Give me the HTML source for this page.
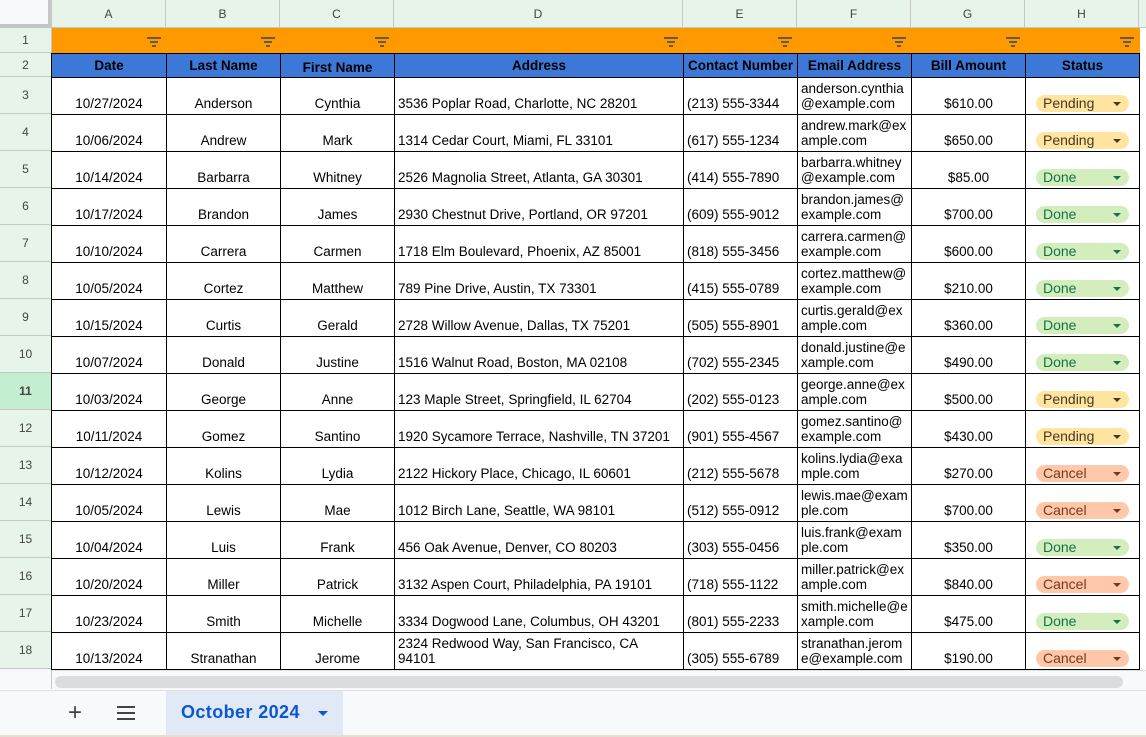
<!DOCTYPE html>
<html><head><meta charset="utf-8"><style>
*{margin:0;padding:0;box-sizing:border-box}
body{width:1146px;height:737px;overflow:hidden;background:#fff;font-family:"Liberation Sans",Arial,sans-serif;position:relative}
.ch{position:absolute;top:0;height:28px;background:#e6f4ea;border-right:1px solid #c4c7c5;border-bottom:1px solid #c4c7c5;font-size:12px;color:#444;text-align:center;line-height:28px}
.rh{position:absolute;left:0;width:52px;background:#e6f4ea;border-right:1px solid #c4c7c5;border-bottom:1px solid #c4c7c5;font-size:12px;color:#444;text-align:center}
table{position:absolute;left:51px;top:28px;border-collapse:collapse;table-layout:fixed}
td{border:1px solid #000;font-size:13.5px;color:#000;vertical-align:bottom;line-height:15px;padding:0 3px 3px;overflow:hidden;white-space:nowrap}
tr.o td{background:#ff9900;border:none;height:25px;text-align:right;vertical-align:middle;padding:2px 6px 0 0}
tr.b td{background:#3c78d8;height:24px;font-weight:bold;text-align:center;vertical-align:middle;padding:0 2px}
tr.d td{height:37px}
.c{text-align:center}.l{text-align:left}
.p{display:block;height:17px;border-radius:9px;font-size:14px;line-height:17px;padding-left:7px;position:relative;margin:0 7px -1px 7px}
.p:after{content:"";position:absolute;right:8px;top:7px;border-left:4px solid transparent;border-right:4px solid transparent;border-top:4px solid currentColor}
.pe{background:#ffe5a0;color:#473821}.do{background:#d4edbc;color:#11734b}.ca{background:#ffc8aa;color:#753918}
.f{display:inline-block;width:14px;height:9px;position:relative}
.f i{position:absolute;left:0;right:0;height:2px;background:#6b5a3a}
</style></head><body>
<div class="ch" style="left:0;width:52px;background:#f8f9fa;border-right:4px solid #c4c7c5;border-bottom:4px solid #c4c7c5"></div>
<div class="ch" style="left:52px;width:114px">A</div>
<div class="ch" style="left:166px;width:114px">B</div>
<div class="ch" style="left:280px;width:114px">C</div>
<div class="ch" style="left:394px;width:289px">D</div>
<div class="ch" style="left:683px;width:114px">E</div>
<div class="ch" style="left:797px;width:114px">F</div>
<div class="ch" style="left:911px;width:114px">G</div>
<div class="ch" style="left:1025px;width:114px">H</div>
<div class="ch" style="left:1139px;width:7px;border-right:none"></div>
<div class="rh" style="top:28px;height:25px;line-height:25px">1</div>
<div class="rh" style="top:53px;height:24px;line-height:24px">2</div>
<div class="rh" style="top:77px;height:37px;line-height:37px">3</div>
<div class="rh" style="top:114px;height:37px;line-height:37px">4</div>
<div class="rh" style="top:151px;height:37px;line-height:37px">5</div>
<div class="rh" style="top:188px;height:37px;line-height:37px">6</div>
<div class="rh" style="top:225px;height:37px;line-height:37px">7</div>
<div class="rh" style="top:262px;height:37px;line-height:37px">8</div>
<div class="rh" style="top:299px;height:37px;line-height:37px">9</div>
<div class="rh" style="top:336px;height:37px;line-height:37px">10</div>
<div class="rh" style="top:373px;height:37px;line-height:37px;background:#c4eed0;font-weight:bold">11</div>
<div class="rh" style="top:410px;height:37px;line-height:37px">12</div>
<div class="rh" style="top:447px;height:37px;line-height:37px">13</div>
<div class="rh" style="top:484px;height:37px;line-height:37px">14</div>
<div class="rh" style="top:521px;height:37px;line-height:37px">15</div>
<div class="rh" style="top:558px;height:37px;line-height:37px">16</div>
<div class="rh" style="top:595px;height:37px;line-height:37px">17</div>
<div class="rh" style="top:632px;height:37px;line-height:37px">18</div>
<div class="rh" style="top:669px;height:20px;background:#f8f9fa;border-bottom:none"></div>
<table>
<colgroup><col style="width:115px"><col style="width:114px"><col style="width:114px"><col style="width:289px"><col style="width:114px"><col style="width:114px"><col style="width:114px"><col style="width:114px"></colgroup>
<tr class="o"><td><span class="f"><i style="top:0"></i><i style="top:4px;left:3px;right:3px"></i><i style="top:8px;left:5px;right:5px"></i></span></td><td><span class="f"><i style="top:0"></i><i style="top:4px;left:3px;right:3px"></i><i style="top:8px;left:5px;right:5px"></i></span></td><td><span class="f"><i style="top:0"></i><i style="top:4px;left:3px;right:3px"></i><i style="top:8px;left:5px;right:5px"></i></span></td><td><span class="f"><i style="top:0"></i><i style="top:4px;left:3px;right:3px"></i><i style="top:8px;left:5px;right:5px"></i></span></td><td><span class="f"><i style="top:0"></i><i style="top:4px;left:3px;right:3px"></i><i style="top:8px;left:5px;right:5px"></i></span></td><td><span class="f"><i style="top:0"></i><i style="top:4px;left:3px;right:3px"></i><i style="top:8px;left:5px;right:5px"></i></span></td><td><span class="f"><i style="top:0"></i><i style="top:4px;left:3px;right:3px"></i><i style="top:8px;left:5px;right:5px"></i></span></td><td><span class="f"><i style="top:0"></i><i style="top:4px;left:3px;right:3px"></i><i style="top:8px;left:5px;right:5px"></i></span></td></tr>
<tr class="b"><td>Date</td><td>Last Name</td><td style="vertical-align:bottom;padding-bottom:2px">First Name</td><td>Address</td><td>Contact Number</td><td>Email Address</td><td>Bill Amount</td><td>Status</td></tr>
<tr class="d"><td class="c">10/27/2024</td><td class="c">Anderson</td><td class="c">Cynthia</td><td>3536 Poplar Road, Charlotte, NC 28201</td><td>(213) 555-3344</td><td>anderson.cynthia<br>@example.com</td><td class="c">$610.00</td><td><span class="p pe">Pending</span></td></tr>
<tr class="d"><td class="c">10/06/2024</td><td class="c">Andrew</td><td class="c">Mark</td><td>1314 Cedar Court, Miami, FL 33101</td><td>(617) 555-1234</td><td>andrew.mark@ex<br>ample.com</td><td class="c">$650.00</td><td><span class="p pe">Pending</span></td></tr>
<tr class="d"><td class="c">10/14/2024</td><td class="c">Barbarra</td><td class="c">Whitney</td><td>2526 Magnolia Street, Atlanta, GA 30301</td><td>(414) 555-7890</td><td>barbarra.whitney<br>@example.com</td><td class="c">$85.00</td><td><span class="p do">Done</span></td></tr>
<tr class="d"><td class="c">10/17/2024</td><td class="c">Brandon</td><td class="c">James</td><td>2930 Chestnut Drive, Portland, OR 97201</td><td>(609) 555-9012</td><td>brandon.james@<br>example.com</td><td class="c">$700.00</td><td><span class="p do">Done</span></td></tr>
<tr class="d"><td class="c">10/10/2024</td><td class="c">Carrera</td><td class="c">Carmen</td><td>1718 Elm Boulevard, Phoenix, AZ 85001</td><td>(818) 555-3456</td><td>carrera.carmen@<br>example.com</td><td class="c">$600.00</td><td><span class="p do">Done</span></td></tr>
<tr class="d"><td class="c">10/05/2024</td><td class="c">Cortez</td><td class="c">Matthew</td><td>789 Pine Drive, Austin, TX 73301</td><td>(415) 555-0789</td><td>cortez.matthew@<br>example.com</td><td class="c">$210.00</td><td><span class="p do">Done</span></td></tr>
<tr class="d"><td class="c">10/15/2024</td><td class="c">Curtis</td><td class="c">Gerald</td><td>2728 Willow Avenue, Dallas, TX 75201</td><td>(505) 555-8901</td><td>curtis.gerald@ex<br>ample.com</td><td class="c">$360.00</td><td><span class="p do">Done</span></td></tr>
<tr class="d"><td class="c">10/07/2024</td><td class="c">Donald</td><td class="c">Justine</td><td>1516 Walnut Road, Boston, MA 02108</td><td>(702) 555-2345</td><td>donald.justine@e<br>xample.com</td><td class="c">$490.00</td><td><span class="p do">Done</span></td></tr>
<tr class="d"><td class="c">10/03/2024</td><td class="c">George</td><td class="c">Anne</td><td>123 Maple Street, Springfield, IL 62704</td><td>(202) 555-0123</td><td>george.anne@ex<br>ample.com</td><td class="c">$500.00</td><td><span class="p pe">Pending</span></td></tr>
<tr class="d"><td class="c">10/11/2024</td><td class="c">Gomez</td><td class="c">Santino</td><td>1920 Sycamore Terrace, Nashville, TN 37201</td><td>(901) 555-4567</td><td>gomez.santino@<br>example.com</td><td class="c">$430.00</td><td><span class="p pe">Pending</span></td></tr>
<tr class="d"><td class="c">10/12/2024</td><td class="c">Kolins</td><td class="c">Lydia</td><td>2122 Hickory Place, Chicago, IL 60601</td><td>(212) 555-5678</td><td>kolins.lydia@exa<br>mple.com</td><td class="c">$270.00</td><td><span class="p ca">Cancel</span></td></tr>
<tr class="d"><td class="c">10/05/2024</td><td class="c">Lewis</td><td class="c">Mae</td><td>1012 Birch Lane, Seattle, WA 98101</td><td>(512) 555-0912</td><td>lewis.mae@exam<br>ple.com</td><td class="c">$700.00</td><td><span class="p ca">Cancel</span></td></tr>
<tr class="d"><td class="c">10/04/2024</td><td class="c">Luis</td><td class="c">Frank</td><td>456 Oak Avenue, Denver, CO 80203</td><td>(303) 555-0456</td><td>luis.frank@exam<br>ple.com</td><td class="c">$350.00</td><td><span class="p do">Done</span></td></tr>
<tr class="d"><td class="c">10/20/2024</td><td class="c">Miller</td><td class="c">Patrick</td><td>3132 Aspen Court, Philadelphia, PA 19101</td><td>(718) 555-1122</td><td>miller.patrick@ex<br>ample.com</td><td class="c">$840.00</td><td><span class="p ca">Cancel</span></td></tr>
<tr class="d"><td class="c">10/23/2024</td><td class="c">Smith</td><td class="c">Michelle</td><td>3334 Dogwood Lane, Columbus, OH 43201</td><td>(801) 555-2233</td><td>smith.michelle@e<br>xample.com</td><td class="c">$475.00</td><td><span class="p do">Done</span></td></tr>
<tr class="d"><td class="c">10/13/2024</td><td class="c">Stranathan</td><td class="c">Jerome</td><td>2324 Redwood Way, San Francisco, CA<br>94101</td><td>(305) 555-6789</td><td>stranathan.jerom<br>e@example.com</td><td class="c">$190.00</td><td><span class="p ca">Cancel</span></td></tr>
</table>
<div style="position:absolute;left:52px;top:670px;width:1094px;height:20px;background:#f8f9fa;border-top:1px solid #e0e0e0"></div>
<div style="position:absolute;left:55px;top:676px;width:1068px;height:12px;background:#dadce0;border-radius:6px"></div>
<div style="position:absolute;left:0;top:690px;width:1146px;height:47px;background:#f8f9fa;border-top:1px solid #e0e0e0;border-bottom:2px solid #e6dfcf"></div>
<div style="position:absolute;left:68px;top:703px;font-size:24px;color:#444;line-height:20px">+</div>
<div style="position:absolute;left:117px;top:706px;width:18px">
<div style="height:2px;background:#444;margin-bottom:4px"></div><div style="height:2px;background:#444;margin-bottom:4px"></div><div style="height:2px;background:#444"></div></div>
<div style="position:absolute;left:166px;top:691px;width:177px;height:44px;background:#e1e9f7"></div>
<div style="position:absolute;left:181px;top:702px;font-size:18px;font-weight:bold;color:#0b57d0;letter-spacing:0.4px">October 2024</div>
<div style="position:absolute;left:318px;top:711px;border-left:5px solid transparent;border-right:5px solid transparent;border-top:5px solid #0b57d0"></div>
</body></html>
